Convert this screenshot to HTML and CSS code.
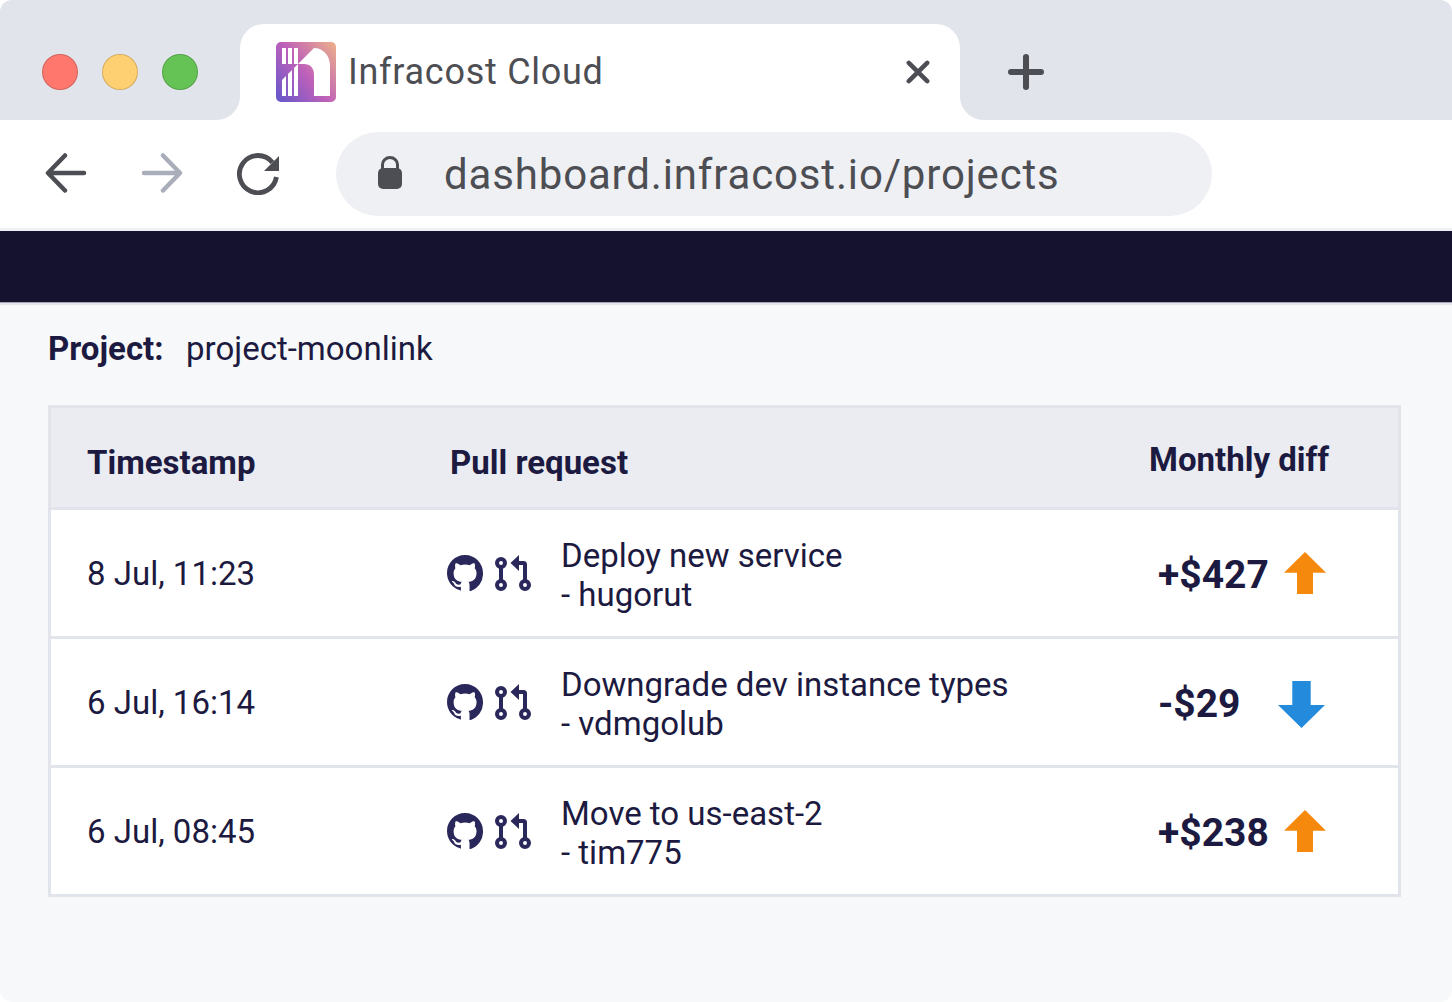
FILE: index.html
```html
<!DOCTYPE html>
<html lang="en">
<head>
<meta charset="utf-8">
<title>Infracost Cloud</title>
<link rel="stylesheet" href="styles.css">
</head>
<body>
<svg class="sprite" aria-hidden="true">
  <symbol id="github" viewBox="0 0 16 16"><path fill="currentColor" d="M8 0C3.580 0 0 3.580 0 8c0 3.540 2.290 6.530 5.470 7.590.4.070.7.410.7.410v-1.870c-2.010.37-2.680-.49-2.840-.94-.09-.23-.48-.94-.82-1.130-.28-.15-.68-.52-.01-.53.63-.01 1.080.58 1.230.82.72 1.210 1.870.87 2.330.66.070-.52.280-.87.510-1.070-1.780-.2-3.640-.89-3.640-3.950 0-.87.310-1.590.820-2.150-.08-.2-.36-1.020.080-2.120 0 0 .67-.21 2.200.820.640-.18 1.320-.27 2-.27s1.360.090 2 .270c1.530-1.040 2.200-.82 2.200-.82.440 1.100.160 1.920.080 2.120.510.560.820 1.270.820 2.150 0 3.070-1.870 3.750-3.650 3.950.290.250.540.730.540 1.480V16s.29-.05.540-.03A8.010 8.010 0 0 0 16 8c0-4.420-3.580-8-8-8z"/></symbol>
  <symbol id="pull" viewBox="0 0 36 36">
    <g fill="none" stroke="currentColor" stroke-width="4"><circle cx="6" cy="8" r="4"/><circle cx="6" cy="30" r="4"/><circle cx="30" cy="30" r="4"/><path d="M6 12v14M20 8h8.500a1.500 1.500 0 0 1 1.500 1.500V26"/></g>
    <path fill="currentColor" d="M15.500 8 24 0v16z"/>
  </symbol>
  <symbol id="up" viewBox="0 0 42 42"><path fill="#f5890d" d="M21 0 42 20.700H29V42H13V20.700H0z"/></symbol>
  <symbol id="down" viewBox="0 0 47 47"><path fill="#248adb" d="M14.300 0H32.700V24H47L23.500 47 0 24H14.300z"/></symbol>
</svg>
<div class="window">
  <header class="tabs">
    <div class="lights"><i class="light red"></i><i class="light yellow"></i><i class="light green"></i></div>
    <div class="tab">
      <svg class="logo" viewBox="0 0 60 60">
        <defs><linearGradient id="brand" x1="0" y1=".9" x2="1" y2=".12"><stop offset="0" stop-color="#6a57ca"/><stop offset=".5" stop-color="#c061b9"/><stop offset="1" stop-color="#e8a98e"/></linearGradient></defs>
        <rect width="60" height="60" rx="5" fill="url(#brand)"/>
        <path fill="#fff" d="M6 6h4v16H6zM12 6h4v16h-4zM18 6h4v16h-4zM6 38l4-4V54H6zM12 32l4-4V54h-4zM18 26 38 6C47 6 54 13.500 54 23.500V54H38V32C38 26 34 22 28 22h-6v32h-4z"/>
      </svg>
      <span class="title">Infracost Cloud</span>
      <svg class="close" viewBox="0 0 24 24"><path d="M2.800 2.800 21.200 21.200M21.200 2.800 2.800 21.200"/></svg>
    </div>
    <svg class="plus" viewBox="0 0 36 36"><path d="M18 3v30M3 18h30"/></svg>
  </header>
  <div class="toolbar">
    <svg class="arrow" viewBox="0 0 42 42"><path d="M39 21H3.500M20 3.500 3 21 20 38.500"/></svg>
    <svg class="arrow muted" viewBox="0 0 42 42"><path d="M3 21H38.500M22 3.500 39 21 22 38.500"/></svg>
    <svg class="reload" viewBox="0 0 42 42"><path fill="none" stroke="currentColor" stroke-width="4.800" d="M39.400 24A18.600 18.600 0 1 1 35.500 9.400"/><path fill="currentColor" d="M42 3v15H27z"/></svg>
    <div class="address">
      <svg class="lock" viewBox="0 0 24 34"><path fill="none" stroke="currentColor" stroke-width="3" d="M4.500 14V8.500a7.500 7 0 0 1 15 0V14"/><rect y="12" width="24" height="21" rx="5" fill="currentColor"/></svg>
      <span class="url">dashboard.infracost.io/projects</span>
    </div>
  </div>
  <div class="navbar"></div>
  <main class="content">
    <div class="project"><b>Project:</b><span class="project-name">project-moonlink</span></div>
    <div class="table">
      <div class="row head"><span>Timestamp</span><span class="pr-head">Pull request</span><span class="diff-head">Monthly diff</span></div>
      <div class="row">
        <span class="time">8 Jul, 11:23</span>
        <span class="icons"><svg><use href="#github"/></svg><svg><use href="#pull"/></svg></span>
        <span class="request">Deploy new service<br>- hugorut</span>
        <span class="diff"><b class="amount">+$427</b><svg class="up"><use href="#up"/></svg></span>
      </div>
      <div class="row">
        <span class="time">6 Jul, 16:14</span>
        <span class="icons"><svg><use href="#github"/></svg><svg><use href="#pull"/></svg></span>
        <span class="request">Downgrade dev instance types<br>- vdmgolub</span>
        <span class="diff"><b class="amount">-$29</b><svg class="down"><use href="#down"/></svg></span>
      </div>
      <div class="row">
        <span class="time">6 Jul, 08:45</span>
        <span class="icons"><svg><use href="#github"/></svg><svg><use href="#pull"/></svg></span>
        <span class="request">Move to us-east-2<br>- tim775</span>
        <span class="diff"><b class="amount">+$238</b><svg class="up"><use href="#up"/></svg></span>
      </div>
    </div>
  </main>
</div>
</body>
</html>
```
FILE: styles.css
```css
* { box-sizing: border-box; }
body { margin: 0; background: #fff; font-family: Roboto, sans-serif; color: #1c1a40; }
svg { display: block; flex: none; }
.sprite { display: none; }
.window { display: flex; flex-direction: column; height: 1002px; border-radius: 12px; overflow: hidden; background: #f7f8fa; }

.tabs { display: flex; height: 120px; padding-top: 24px; background: #e1e4eb; color: #4d4e53; }
.lights { display: flex; gap: 24px; width: 240px; padding: 30px 0 0 42px; }
.light { width: 36px; height: 36px; border-radius: 50%; border: 1.5px solid rgba(0, 0, 0, .17); }
.red { background: #ff776d; }
.yellow { background: #ffd071; }
.green { background: #65c356; }
.tab { position: relative; display: flex; align-items: center; width: 720px; height: 96px; padding: 0 30px 0 36px; background: #fff; border-radius: 24px 24px 0 0; }
.tab::before, .tab::after { content: ""; position: absolute; bottom: 0; width: 24px; height: 24px; }
.tab::before { right: 100%; background: radial-gradient(circle at 0 0, transparent 23.5px, #fff 24.5px); }
.tab::after { left: 100%; background: radial-gradient(circle at 100% 0, transparent 23.5px, #fff 24.5px); }
.logo { width: 60px; height: 60px; }
.title { margin-left: 12px; font-size: 36px; line-height: 42px; letter-spacing: .02em; white-space: nowrap; }
.close { width: 24px; height: 24px; margin-left: auto; }
.close path, .plus path, .arrow path { fill: none; stroke: currentColor; stroke-linecap: round; stroke-linejoin: round; stroke-width: 4.5; }
.plus { width: 36px; height: 36px; margin: 30px 0 0 48px; }
.plus path { stroke-width: 6; }

.toolbar { display: flex; align-items: center; height: 111px; padding: 0 0 1px 45px; background: #fff; border-bottom: 3px solid #eff0f4; color: #4d4e53; }
.arrow { width: 42px; height: 42px; margin: -2px 54px 0 0; }
.muted { color: #a9aeba; }
.reload { width: 42px; height: 42px; }
.address { display: flex; align-items: center; width: 876px; height: 84px; margin-left: 57px; padding-left: 42px; border-radius: 42px; background: #eff0f4; }
.lock { width: 24px; height: 34px; margin-top: -1px; }
.url { margin: 2px 0 0 42px; font-size: 42px; line-height: 50px; letter-spacing: .02em; white-space: nowrap; }

.navbar { height: 71px; background: #14122f; box-shadow: 0 1px 0 #a4a8b4, 0 3px 0 #e1e4ea; position: relative; }

.content { flex: 1; padding: 27px 51px 0 48px; font-size: 33px; line-height: 39px; }
.project { display: flex; gap: 22.5px; height: 76px; }
.table { border: 3px solid #e1e4ea; background: #e1e4ea; display: flex; flex-direction: column; gap: 3px; }
.row { display: grid; grid-template-columns: 360px 114px 588px 1fr; align-items: center; height: 126px; padding-left: 36px; background: #fff; white-space: nowrap; }
.head { height: 99px; padding-top: 10px; background: #ebecf1; font-weight: 700; }
.pr-head { grid-column: 2 / 4; padding-left: 3px; }
.diff-head { margin-top: -6px; }
.icons { display: flex; gap: 12px; color: #2a275b; }
.icons svg { width: 36px; height: 36px; }
.request { padding-top: 3px; }
.diff { display: flex; align-items: center; padding-left: 9px; }
.amount { margin-top: 4px; font-size: 39px; line-height: 46px; }
.diff svg { margin-left: auto; }
.up { width: 42px; height: 42px; margin-right: 72px; }
.diff .down { width: 47px; height: 47px; margin-right: 73px; margin-top: 4px; }
```
